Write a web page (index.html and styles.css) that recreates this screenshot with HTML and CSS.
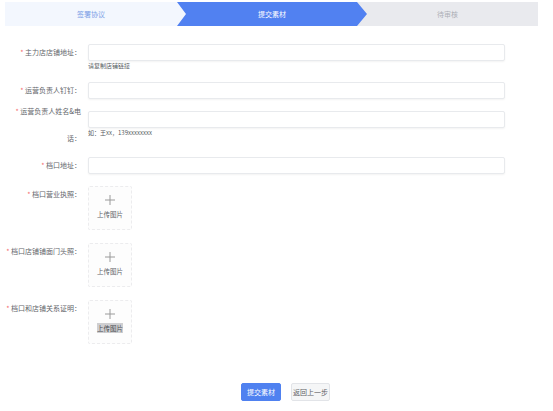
FILE: index.html
```html
<!DOCTYPE html>
<html lang="zh-CN">
<head>
<meta charset="utf-8">
<title>提交素材</title>
<link rel="stylesheet" href="styles.css">
</head>
<body>
<div class="steps">
  <div class="step step-done">签署协议</div>
  <div class="step step-active">提交素材</div>
  <div class="step step-todo">待审核</div>
</div>

<form class="form">
  <div class="item">
    <div class="label"><span class="req">*</span> 主力店店铺地址：</div>
    <div class="content">
      <input class="input" type="text">
      <div class="hint">请复制店铺链接</div>
    </div>
  </div>

  <div class="item">
    <div class="label"><span class="req">*</span> 运营负责人钉钉：</div>
    <div class="content">
      <input class="input" type="text">
    </div>
  </div>

  <div class="item">
    <div class="label label-wrap"><span class="req">*</span> 运营负责人姓名&amp;电<br>话：</div>
    <div class="content">
      <input class="input" type="text">
      <div class="hint">如：王xx，139xxxxxxxx</div>
    </div>
  </div>

  <div class="item">
    <div class="label"><span class="req">*</span> 档口地址：</div>
    <div class="content">
      <input class="input" type="text">
    </div>
  </div>

  <div class="item item-upload">
    <div class="label"><span class="req">*</span> 档口营业执照：</div>
    <div class="content">
      <div class="upload">
        <svg class="plus" width="10" height="10" viewBox="0 0 10 10"><path d="M5 0V10M0 5H10" stroke="#9a9a9a" stroke-width="1" fill="none"/></svg>
        <div class="upload-text">上传图片</div>
      </div>
    </div>
  </div>

  <div class="item item-upload">
    <div class="label"><span class="req">*</span> 档口店铺铺面门头照：</div>
    <div class="content">
      <div class="upload">
        <svg class="plus" width="10" height="10" viewBox="0 0 10 10"><path d="M5 0V10M0 5H10" stroke="#9a9a9a" stroke-width="1" fill="none"/></svg>
        <div class="upload-text">上传图片</div>
      </div>
    </div>
  </div>

  <div class="item item-upload item-last">
    <div class="label"><span class="req">*</span> 档口和店铺关系证明：</div>
    <div class="content">
      <div class="upload">
        <svg class="plus" width="10" height="10" viewBox="0 0 10 10"><path d="M5 0V10M0 5H10" stroke="#9a9a9a" stroke-width="1" fill="none"/></svg>
        <div class="upload-text"><span class="selected">上传图片</span></div>
      </div>
    </div>
  </div>

  <div class="actions">
    <button type="button" class="btn btn-primary">提交素材</button>
    <button type="button" class="btn btn-default">返回上一步</button>
  </div>
</form>
</body>
</html>
```

FILE: styles.css
```css
* { box-sizing: border-box; }

html, body {
  margin: 0;
  padding: 0;
  background: #ffffff;
  font-family: "Noto Sans CJK SC", "Noto Sans", sans-serif;
  color: #606266;
}

.steps {
  display: flex;
  height: 24px;
  margin: 2px 15px 0 5px;
  background: #e9eaee;
  font-size: 7px;
  line-height: 24px;
}

.step {
  text-align: center;
  white-space: nowrap;
}

.step-done {
  width: 181px;
  padding-right: 9px;
  background: #f3f7fe;
  color: #7d9fe6;
}

.step-active {
  width: 190px;
  margin-left: -9px;
  background: #5181f1;
  color: #ffffff;
  clip-path: polygon(0 0, 180px 0, 190px 50%, 180px 100%, 0 100%, 9px 50%);
  z-index: 1;
}

.step-todo {
  flex: 1;
  margin-left: -10px;
  color: #adb0b7;
}

.form {
  margin: 0;
  padding-top: 18px;
}

.item {
  display: flex;
  align-items: flex-start;
  margin-bottom: 12px;
}

.item-upload {
  margin-bottom: 13px;
}

.item-last {
  margin-bottom: 0;
}

.label {
  width: 88px;
  flex-shrink: 0;
  padding-right: 7px;
  text-align: right;
  white-space: nowrap;
  font-size: 7px;
  line-height: 17px;
  color: #63666b;
}

.label-wrap {
  line-height: 27px;
  margin-top: -13px;
  margin-bottom: -7px;
}

.req {
  color: #f56c6c;
}

.content {
  display: flex;
  flex-direction: column;
}

.input {
  display: block;
  width: 417px;
  height: 17px;
  margin: 0;
  padding: 0 6px;
  border: 1px solid #e8eaed;
  border-radius: 2px;
  background: #ffffff;
  box-shadow: 0 1px 2px rgba(0, 0, 0, 0.05);
  font-family: inherit;
  font-size: 7px;
  outline: none;
}

.hint {
  font-size: 6px;
  line-height: 9px;
  color: #555a61;
}

.upload {
  width: 44px;
  height: 44px;
  border: 1px dashed #ececee;
  border-radius: 2px;
  background: #fdfdfd;
  display: flex;
  flex-direction: column;
  align-items: center;
  padding-top: 8px;
}

.plus {
  display: block;
}

.upload-text {
  margin-top: 5px;
  font-size: 6.5px;
  line-height: 9px;
  color: #5f6368;
  white-space: nowrap;
}

.selected {
  background: #cfcfd1;
  color: #4a4d52;
}

.actions {
  display: flex;
  gap: 10px;
  padding-left: 241px;
  margin-top: 39px;
}

.btn {
  height: 18px;
  margin: 0;
  padding: 0;
  border-radius: 2px;
  font-family: inherit;
  font-size: 7px;
  line-height: 16px;
  cursor: pointer;
}

.btn-primary {
  width: 40px;
  background: #4f81f0;
  border: 1px solid #4f81f0;
  color: #ffffff;
}

.btn-default {
  width: 39px;
  background: #f5f6f7;
  border: 1px solid #e2e4e8;
  color: #606266;
}
```
